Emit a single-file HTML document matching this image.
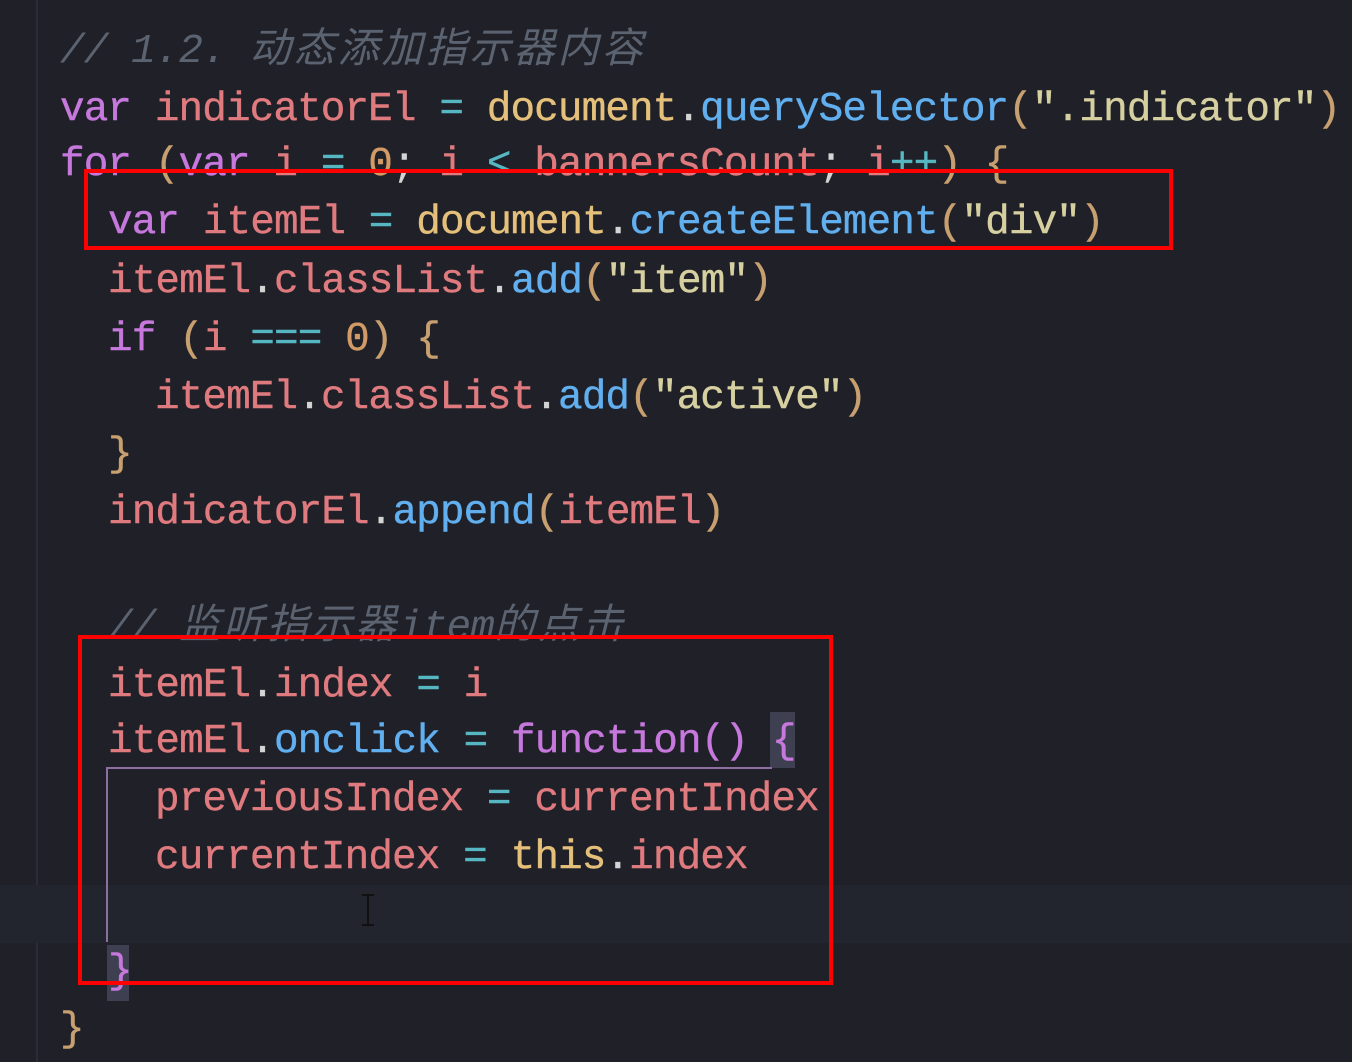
<!DOCTYPE html>
<html><head><meta charset="utf-8"><style>
html,body{margin:0;padding:0;}
body{width:1352px;height:1062px;background:#1f2028;overflow:hidden;position:relative;font-family:"Liberation Mono","Noto Sans CJK SC",monospace;font-size:41px;letter-spacing:-0.9px;}
.l{position:absolute;left:0;height:57.4px;line-height:57.4px;white-space:pre;color:#d4d4d4;-webkit-text-stroke:0.4px currentColor;margin-top:3px;}
.k{color:#c678dd}.v{color:#df7a7e}.f{color:#e5c07b}.m{color:#61afef}.o{color:#56b6c2}.s{color:#d6d0a0}.c{color:#5c6370;font-style:italic;-webkit-text-stroke:0}.n{color:#d19a66}.p{color:#c8a070}
.cj{letter-spacing:3px}
.box{position:absolute;border:4px solid #ff0000;box-sizing:border-box;}
</style></head><body>
<div style="position:absolute;left:36px;top:0;width:2px;height:1062px;background:#2b2d36"></div>
<div style="position:absolute;left:0;top:885px;width:1352px;height:58px;background:#23252e"></div>
<div style="position:absolute;left:770px;top:712px;width:25px;height:56px;background:#3e4052"></div>
<div style="position:absolute;left:107px;top:945px;width:22px;height:56px;background:#3e4052"></div>
<div style="position:absolute;left:106px;top:767px;width:666px;height:2px;background:#8a6fa0"></div>
<div style="position:absolute;left:106px;top:767px;width:2px;height:175px;background:#8a6fa0"></div>
<div class="l" style="top:21px;left:60px"><span class="c">// 1.2. <span class="cj">动态添加指示器内容</span></span></div>
<div class="l" style="top:79px;left:60px"><span class="k">var</span> <span class="v">indicatorEl</span> <span class="o">=</span> <span class="f">document</span>.<span class="m">querySelector</span><span class="p">(</span><span class="s">".indicator"</span><span class="p">)</span></div>
<div class="l" style="top:134px;left:60px"><span class="k">for</span> <span class="p">(</span><span class="k">var</span> <span class="v">i</span> <span class="o">=</span> <span class="n">0</span>; <span class="v">i</span> <span class="o">&lt;</span> <span class="v">bannersCount</span>; <span class="v">i</span><span class="o">++</span><span class="p">)</span> <span class="p">{</span></div>
<div class="l" style="top:192px;left:108px"><span class="k">var</span> <span class="v">itemEl</span> <span class="o">=</span> <span class="f">document</span>.<span class="m">createElement</span><span class="p">(</span><span class="s">"div"</span><span class="p">)</span></div>
<div class="l" style="top:251px;left:108px"><span class="v">itemEl</span>.<span class="v">classList</span>.<span class="m">add</span><span class="p">(</span><span class="s">"item"</span><span class="p">)</span></div>
<div class="l" style="top:309px;left:108px"><span class="k">if</span> <span class="p">(</span><span class="v">i</span> <span class="o">===</span> <span class="n">0</span><span class="p">)</span> <span class="p">{</span></div>
<div class="l" style="top:367px;left:155px"><span class="v">itemEl</span>.<span class="v">classList</span>.<span class="m">add</span><span class="p">(</span><span class="s">"active"</span><span class="p">)</span></div>
<div class="l" style="top:424px;left:108px"><span class="p">}</span></div>
<div class="l" style="top:482px;left:108px"><span class="v">indicatorEl</span>.<span class="m">append</span><span class="p">(</span><span class="v">itemEl</span><span class="p">)</span></div>
<div class="l" style="top:597px;left:108px"><span class="c">// <span class="cj">监听指示器</span>item<span class="cj">的点击</span></span></div>
<div class="l" style="top:655px;left:108px"><span class="v">itemEl</span>.<span class="v">index</span> <span class="o">=</span> <span class="v">i</span></div>
<div class="l" style="top:711px;left:108px"><span class="v">itemEl</span>.<span class="m">onclick</span> <span class="o">=</span> <span class="k">function</span><span class="k">()</span> <span class="k">{</span></div>
<div class="l" style="top:769px;left:155px"><span class="v">previousIndex</span> <span class="o">=</span> <span class="v">currentIndex</span></div>
<div class="l" style="top:827px;left:155px"><span class="v">currentIndex</span> <span class="o">=</span> <span class="f">this</span>.<span class="v">index</span></div>
<div class="l" style="top:941px;left:108px"><span class="k">}</span></div>
<div class="l" style="top:999px;left:60px"><span class="p">}</span></div>
<div style="position:absolute;left:367px;top:895px;width:2px;height:30px;background:#111"></div>
<div style="position:absolute;left:362px;top:894px;width:12px;height:2px;background:#111"></div>
<div style="position:absolute;left:362px;top:924px;width:12px;height:2px;background:#111"></div>
<div class="box" style="left:84px;top:169px;width:1089px;height:81px"></div>
<div class="box" style="left:78px;top:635px;width:755px;height:350px"></div>
</body></html>
